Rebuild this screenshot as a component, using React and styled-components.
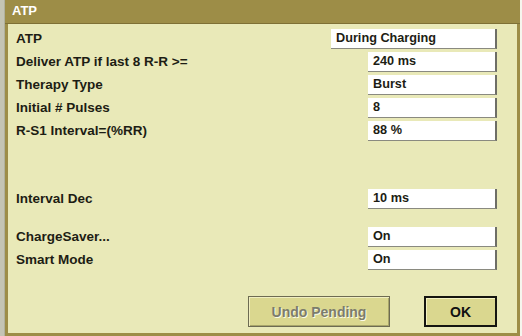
import React from "react"
import styled, { createGlobalStyle } from "styled-components"

const Global = createGlobalStyle`
  html, body { margin: 0; padding: 0; background: #f4f4ec; }
  body { font-family: "Liberation Sans", Arial, sans-serif; }
`

const Page = styled("div")`
  display: flex;
  width: 522px;
  height: 336px;
  background: #f6f6ee;
`

const Strip = styled("div")`
  width: 4px;
  background: #c4c4b4;
  border-right: 1px solid #b0b09c;
`

const Frame = styled("div")`
  width: 515px;
  height: 336px;
  display: flex;
  flex-direction: column;
`

const Header = styled("div")`
  height: 24px;
  background: #9d8d47;
  color: #fff;
  font-weight: bold;
  font-size: 13px;
  line-height: 21px;
  padding-left: 7px;
  border-bottom: 1px solid #7e7035;
  box-sizing: border-box;
`

const Body = styled("div")`
  flex: 1;
  display: flex;
  flex-direction: column;
  background: #e9e9b8;
  border-left: 3px solid #9d8d47;
  border-right: 3px solid #9d8d47;
  border-bottom: 3px solid #9d8d47;
  padding: 3px 20px 6px 8px;
  box-sizing: border-box;
`

const Row = styled("div")`
  display: flex;
  align-items: center;
  height: 23px;
  margin-top: ${props => props.gap || 0}px;
`

const Label = styled("div")`
  flex: 1;
  font-size: 13.5px;
  font-weight: bold;
  color: #1d1d14;
`

const Field = styled("div")`
  width: ${props => props.wide ? 166 : 129}px;
  height: 20px;
  box-sizing: border-box;
  background: #fff;
  border-right: 2px solid #6e6e66;
  border-bottom: 1px solid #8a8a80;
  font-size: 12.7px;
  font-weight: bold;
  color: #1d1d14;
  line-height: 19px;
  padding-left: 5px;
`

const Buttons = styled("div")`
  margin-top: auto;
  display: flex;
  justify-content: flex-end;
  gap: 34px;
`

const Button = styled("div")`
  width: ${props => props.w}px;
  height: 31px;
  box-sizing: border-box;
  display: flex;
  align-items: center;
  justify-content: center;
  background: #dad78f;
  font-size: 14px;
  font-weight: bold;
  border: ${props => props.primary ? "2px solid #151510" : "1px solid #6d6b52"};
  box-shadow: ${props => props.primary ? "inset 1px 1px 0 #f4f2c4" : "inset 1px 1px 0 #f0eec0, inset -1px -1px 0 #a8a56a"};
  color: ${props => props.disabled ? "#7c7c6c" : "#111"};
  text-shadow: ${props => props.disabled ? "1px 1px 0 #fbfbe8" : "none"};
`

const rows = [
  { label: "ATP", value: "During Charging", wide: true, gap: 0 },
  { label: "Deliver ATP if last 8 R-R >=", value: "240 ms", gap: 0 },
  { label: "Therapy Type", value: "Burst", gap: 0 },
  { label: "Initial # Pulses", value: "8", gap: 0 },
  { label: "R-S1 Interval=(%RR)", value: "88 %", gap: 0 },
  { label: "Interval Dec", value: "10 ms", gap: 45 },
  { label: "ChargeSaver...", value: "On", gap: 15 },
  { label: "Smart Mode", value: "On", gap: 0 },
]

export default function App() {
  return (
    <Page>
      <Global />
      <Strip />
      <Frame>
        <Header>ATP</Header>
        <Body>
          {rows.map((r, i) => (
            <Row key={i} gap={r.gap}>
              <Label>{r.label}</Label>
              <Field wide={r.wide}>{r.value}</Field>
            </Row>
          ))}
          <Buttons>
            <Button w={142} disabled>Undo Pending</Button>
            <Button w={73} primary>OK</Button>
          </Buttons>
        </Body>
      </Frame>
    </Page>
  )
}
